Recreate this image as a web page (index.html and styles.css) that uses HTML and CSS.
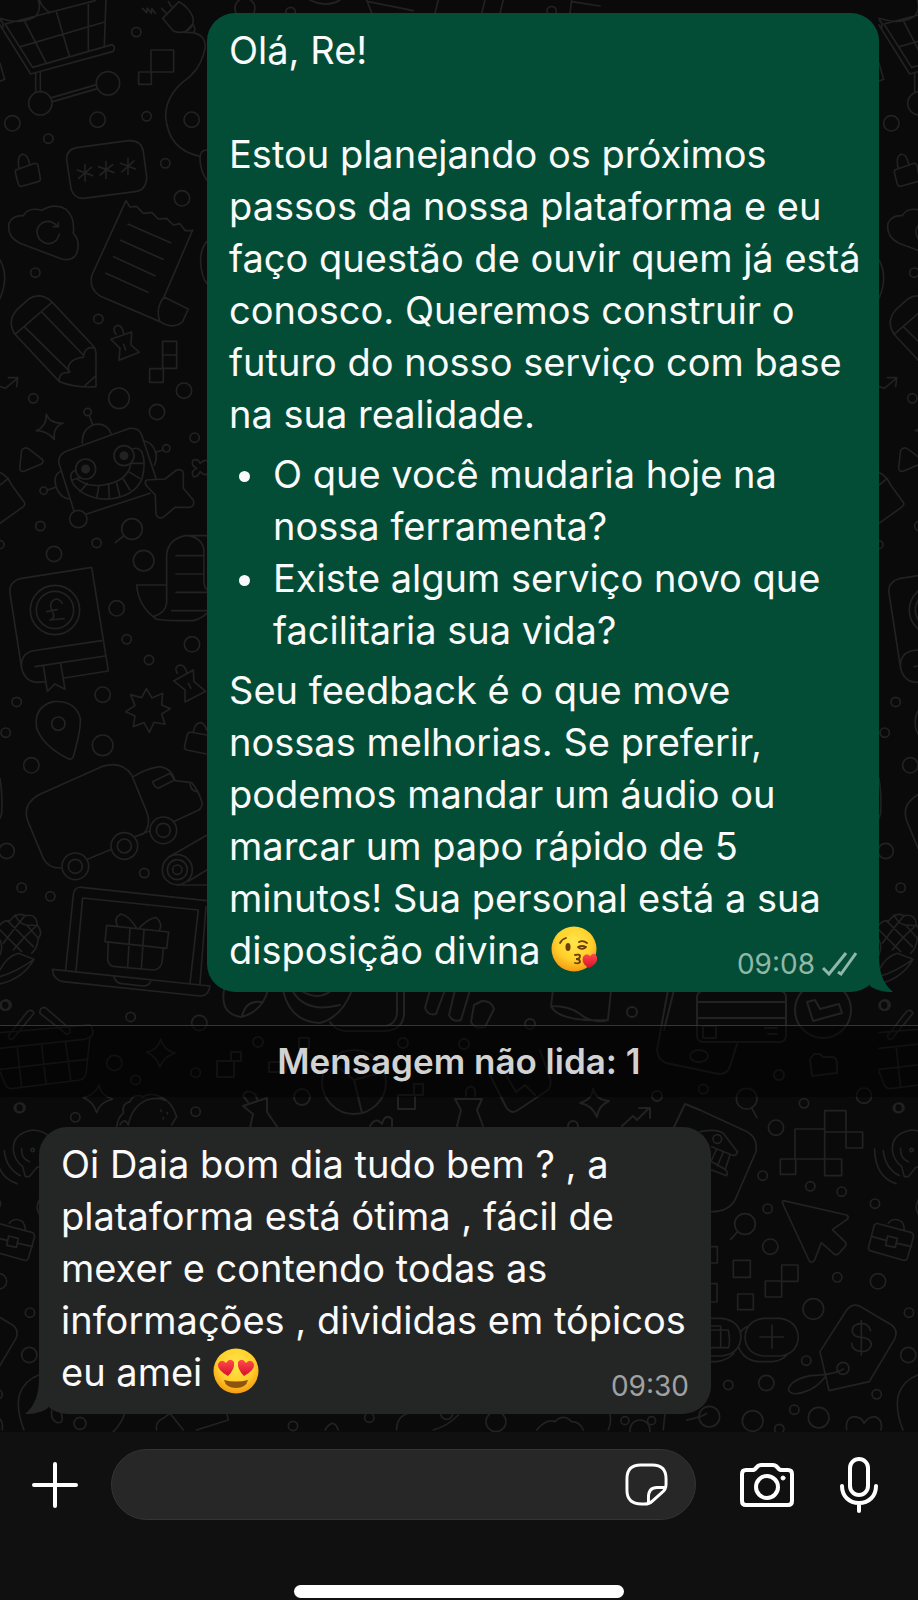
FILE: index.html
```html
<!DOCTYPE html>
<html lang="pt-BR">
<head>
    <meta charset="UTF-8">
    <meta name="viewport" content="width=device-width, initial-scale=1.0">
    <title>Conversa</title>
    <link rel="stylesheet" href="styles.css">
</head>
<body>

    <main class="chat">
        <!-- doodle wallpaper, repeats every 879px -->
        <svg class="wallpaper" aria-hidden="true">
            <g id="doodles">
                <g transform="scale(.3333)">
                    <path d="M0 55Q60 75 105 50Q125 30 115 0M0 75L92 222L340 154Q348 138 336 134L98 202L15 72L285 2M75 66L138 188M170 38L208 168M265 6V150M318 0L313 136M62 140L314 66M0 60Q12 66 8 84M118 0Q128 25 150 38"/>
                    <path d="M107 220V275M121 217V275M155 293L290 254M158 305L292 266M0 190L14 238L0 244"/>
                    <circle cx="121" cy="310" r="35"/><circle cx="324" cy="250" r="35"/>
                    <path d="M505 5L515 20M485 25L497 38M537 5L488 55L520 93Q545 103 565 90Q585 75 578 50Q565 20 537 5M555 97L578 72Q590 88 580 98ZM580 98Q630 110 610 165Q595 215 550 245Q497 290 497 350Q505 450 600 469M428 25L440 38L442 24L454 40L456 26L466 40"/>
                    <path d="M453 150H521V216H453ZM416 216H454V253H416Z"/>
                    <path d="M200 480Q198 450 230 443L385 422Q425 420 430 455L440 530Q440 570 405 575L250 595Q220 595 213 565Z"/>
                    <path d="M255 493V543M232 510L278 527M236 535L274 502M318 485V535M296 500L342 518M300 525L338 494M384 475V523M362 490L406 507M366 516L402 483"/>
                    <path d="M47 510L105 490Q112 490 114 496L121 535Q122 542 115 545L65 559Q57 560 55 553L46 518ZM57 503Q50 470 66 463Q82 460 89 492"/>
                    <path d="M70 647Q85 620 125 631Q165 608 198 628Q225 650 220 700Q243 725 230 760Q218 785 185 777L60 730Q20 710 27 670Q38 645 70 647M173 680Q150 655 125 670Q100 690 119 718Q145 742 168 722Q177 710 178 702M160 680H175V667"/>
                    <path d="M378 602L276 825Q265 865 300 888L480 965Q520 990 548 965L565 927L492 891M578 690L492 891Q465 925 480 965M378 602L390 621L410 619L430 640L455 637L475 657L500 655L520 675L540 671L556 692H578M385 673L512 728M362 721L489 778M341 770L465 827M318 820L444 877"/>
                    <path d="M50 930L85 898Q120 875 155 905L280 1038Q288 1048 288 1060V1160Q230 1165 178 1145L45 1003Q20 965 50 930M45 1003L155 908M75 982L210 1115M127 938L250 1065M178 1145Q175 1115 207 1118Q195 1080 250 1072Q255 1035 285 1045M255 1157L288 1127"/>
                    <path d="M348 1003Q335 985 350 977Q365 973 371 1000M333 1018L395 996L393 1035L418 1057L357 1081L360 1045ZM371 1033L377 1050"/>
                    <path d="M488 1024H530V1105H488ZM488 1065H530M449 1106H490V1147H449Z"/>
                    <path d="M0 780Q28 830 0 895M0 1160L16 1165L52 1135M25 1133L53 1133L50 1160M620 450Q600 450 600 475Q600 510 620 540M620 725Q600 750 602 790Q605 830 620 850"/>
                    <circle cx="409" cy="96" r="14"/><circle cx="37" cy="370" r="23"/><circle cx="293" cy="359" r="23"/><circle cx="145" cy="416" r="14"/><circle cx="440" cy="349" r="14"/><circle cx="575" cy="359" r="23"/><circle cx="496" cy="490" r="14"/><circle cx="546" cy="595" r="23"/><circle cx="106" cy="818" r="14"/><circle cx="295" cy="957" r="14"/><circle cx="552" cy="1172" r="23"/><circle cx="357" cy="1195" r="31"/><circle cx="100" cy="1195" r="14"/>
                    <circle cx="735" cy="25" r="30"/><circle cx="872" cy="36" r="14"/><circle cx="1655" cy="33" r="14"/>
                    <path d="M930 0Q980 25 1020 0M1100 0L1115 38M1105 5L1240 32M1315 0L1305 40M1455 0L1445 40M1510 0L1500 40M1715 0L1710 40M1715 5L1800 18"/>
                </g>
                <g transform="translate(0 400) scale(.3333)">
                    <path d="M139 42Q148 70 189 70Q158 80 163 118Q140 92 109 92Q140 80 139 42M65 150Q75 138 88 148L127 178Q132 187 124 192L72 214Q60 216 59 204ZM0 218Q20 225 35 255L74 308Q76 315 70 320L0 370M0 255L25 235"/>
                    <path d="M180 200Q168 170 195 155L385 86Q415 80 425 105L468 235M180 200L222 333M260 342L450 280M247 130Q245 85 285 73Q320 68 333 100M268 46L277 72M180 215Q155 230 172 270Q185 295 208 297M143 270L167 262M435 123Q460 130 468 160Q470 185 463 195M470 156L488 150"/>
                    <circle cx="263" cy="36" r="11"/><circle cx="131" cy="272" r="11"/><circle cx="499" cy="145" r="11"/><circle cx="235" cy="357" r="26"/><circle cx="257" cy="207" r="30"/><circle cx="257" cy="207" r="11" class="solid"/><circle cx="372" cy="167" r="30"/><circle cx="372" cy="167" r="11" class="solid"/>
                    <path d="M228 210Q200 220 222 255Q260 300 330 297Q400 290 425 240Q440 190 425 155Q415 140 397 147M232 237Q260 262 310 255Q380 245 392 195M218 240L240 232M240 275L262 250M290 295L297 256M328 297L326 255M360 290L350 250M390 270L370 237M420 236L386 215M430 190H395"/>
                    <path d="M440 240L495 237L530 210Q548 205 550 220V265L580 300Q585 320 568 322H525L490 352Q470 358 468 340L466 285L440 258Q432 245 440 240Z"/>
                    <path d="M580 180Q595 175 600 190Q615 175 625 185M580 180Q570 195 590 205Q570 215 580 230Q595 230 600 215Q615 230 625 220"/>
                    <circle cx="396" cy="387" r="31"/><path d="M371 408L346 428"/>
                    <path d="M410 555H500M410 555Q415 620 470 658Q490 663 580 662Q605 655 620 640M500 555V470Q500 420 555 407H620M500 555V610Q495 640 460 650M565 407Q610 415 612 455V550Q615 565 622 570M528 467H610M528 522H610M528 577H620M515 632H620"/>
                    <path d="M275 502L65 535Q25 545 30 580L65 805Q75 845 110 847L135 845M275 502L325 813L192 834M65 805Q60 765 95 753L305 722M105 800L315 768M130 797L142 874L165 852L195 868L182 790"/>
                    <circle cx="165" cy="630" r="74"/><circle cx="165" cy="630" r="56"/><path d="M187 610Q175 590 158 602Q145 615 160 640Q165 655 150 660L192 656M140 635L172 629"/>
                    <path d="M208 1078Q130 1040 110 985Q100 920 160 905Q225 900 241 955Q243 990 220 1070Q215 1080 208 1078Z"/><circle cx="175" cy="971" r="20"/>
                    <path d="M439 866L456 894L488 880L485 915L511 926L485 942L495 973L462 967L448 997L432 968L400 980L405 948L377 935L405 917L392 884L425 893Z"/>
                    <path d="M532 820Q520 800 540 795Q555 795 560 817M521 843L580 810L582 845L617 874L555 906V870ZM565 850L573 865M620 1062L560 1050Q552 1048 554 1038L562 1003Q566 995 575 997L620 1005M580 995Q585 968 603 968Q615 972 620 990"/>
                    <circle cx="471" cy="36" r="23"/><circle cx="584" cy="113" r="14"/><circle cx="121" cy="378" r="14"/><circle cx="0" cy="434" r="12"/><circle cx="290" cy="429" r="14"/><circle cx="162" cy="462" r="23"/><circle cx="431" cy="482" r="31"/><circle cx="350" cy="625" r="23"/><circle cx="380" cy="718" r="14"/><circle cx="576" cy="733" r="23"/><circle cx="447" cy="780" r="14"/><circle cx="308" cy="884" r="23"/><circle cx="50" cy="906" r="14"/><circle cx="17" cy="998" r="14"/><circle cx="308" cy="1036" r="31"/><circle cx="94" cy="1096" r="23"/>
                </g>
                <g transform="translate(0 740) scale(.3333)">
                    <path d="M182 384Q145 385 130 355L84 245Q65 195 115 165L305 80Q365 60 395 105L440 215Q455 255 430 282L405 290M262 358L335 328M405 290L450 272M400 110Q440 85 480 80Q515 85 525 120M458 125L510 100L523 120L475 145Q462 140 458 125ZM525 122L575 128Q595 150 607 190Q605 208 590 213L520 245M570 130Q572 152 590 155"/>
                    <circle cx="226" cy="379" r="40"/><circle cx="226" cy="379" r="21"/><circle cx="373" cy="318" r="40"/><circle cx="373" cy="318" r="21"/><circle cx="490" cy="271" r="40"/><circle cx="490" cy="271" r="21"/>
                    <circle cx="532" cy="389" r="45"/><circle cx="532" cy="389" r="30"/><circle cx="532" cy="389" r="14"/><path d="M508 350L620 286M565 424L620 390M532 435H620"/>
                    <path d="M197 690L220 465Q222 440 245 442L620 482M228 692L248 474L595 510L570 730M600 732L618 500M157 688L630 738Q625 770 600 768L190 725Q160 720 157 688ZM342 712Q350 730 365 731L430 738Q447 738 452 724"/>
                    <path d="M320 556L506 576L500 625L315 605ZM325 607L323 660Q328 680 345 680L460 690Q485 688 487 660L490 624M390 565L383 682M432 570L424 685M410 565Q385 525 362 522Q340 535 352 558M415 567Q445 535 468 532Q490 550 478 572"/>
                    <path d="M0 555Q10 540 30 542Q50 515 75 527Q110 520 112 555Q130 580 115 595Q112 625 95 640M0 570L65 635M25 545L100 620M75 527L40 570L10 610M112 555L75 590L40 630M80 555L115 595M0 600Q10 620 0 645M0 690Q20 650 55 640L102 658Q70 715 0 732M0 710Q50 695 102 658M45 525Q60 555 80 555L112 557"/>
                    <path d="M25 888L82 815Q95 805 102 820L40 895Q30 905 25 888ZM120 820Q118 802 135 802L208 865Q215 880 200 883ZM0 878L270 855Q285 870 275 888Q270 895 250 898L0 925M270 890L258 1000Q255 1015 240 1020L35 1046Q20 1046 15 1032L0 995M0 988L260 958M52 925L65 1042M125 915L138 1030M197 907L212 1020"/>
                    <path d="M482 897Q490 930 525 940Q490 950 480 982Q470 950 440 936Q475 930 482 897M297 1035Q300 1065 338 1078Q300 1085 290 1118Q280 1085 250 1073Q285 1065 297 1035"/>
                    <path d="M350 1160Q355 1130 370 1120Q365 1090 390 1085Q400 1060 430 1070Q455 1055 485 1072Q515 1085 530 1130L515 1155M360 1155Q375 1130 385 1155Q395 1100 440 1080Q480 1070 495 1082M483 1110V1114M502 1118V1122M490 1133V1137"/>
                    <path d="M0 115Q8 160 5 220L0 235"/>
                    <circle cx="20" cy="333" r="23"/><circle cx="433" cy="399" r="14"/><circle cx="65" cy="443" r="14"/><circle cx="151" cy="469" r="14"/><circle cx="14" cy="796" r="14"/><circle cx="392" cy="831" r="14"/><circle cx="598" cy="849" r="23"/><circle cx="343" cy="969" r="23"/><circle cx="407" cy="1020" r="14"/><circle cx="587" cy="998" r="14"/><circle cx="57" cy="1104" r="14"/><circle cx="226" cy="1132" r="14"/><circle cx="587" cy="1115" r="14"/>
                </g>
                <!-- strip around the unread divider -->
                <g class="fine">
                    <path d="M224 990Q220 1014 241 1017Q262 1012 268 990M242 1016Q246 1000 261 1002M283 990Q290 1022 320 1023Q342 1017 352 990M292 990Q305 1014 340 1005M300 990Q318 1002 332 990M404 990V1015Q402 1030 386 1031H345Q335 1030 330 1022M397 990V1013Q396 1024 386 1026H340"/>
                    <path d="M430 990L425 1008Q428 1016 436 1014L445 990M455 990L449 1015Q453 1023 461 1020L470 990M474 1005L471 1022Q475 1030 485 1027L494 1009Q492 1001 482 1001ZM553 990L551 1006Q570 1006 580 1014Q592 1024 608 1020L611 990M551 1006Q558 1022 608 1020"/>
                    <path d="M668 990L657 1050Q658 1060 666 1063L719 1074Q728 1074 730 1066L737 1044M674 990L664 1030"/>
                    <rect x="697" y="991" width="89" height="51" rx="6"/><path d="M697 1002H786M697 1018H786M703 1026H716V1038H703ZM765 1028H777M768 1034H777"/><ellipse cx="699" cy="1056" rx="9" ry="6"/>
                    <circle cx="823" cy="1010" r="28"/><path d="M807 1002L813 1021L842 1013L839 1004L820 1009L815 1000Z"/>
                    <path d="M810 1059L814 1054H820L823 1057H833Q837 1058 837 1064V1073L812 1076ZM217 1061H234V1077H217ZM231 1052H241V1061H231ZM269 1062H286V1072H269ZM299 1038H309V1048H299Z"/>
                    <circle cx="354" cy="1082" r="32"/><path d="M354 1080L330 1060M354 1080L383 1072M354 1080L362 1113M398 1095H415V1109H398ZM414 1084H423V1095H414Z"/>
                    <path d="M248 1102L243 1096Q246 1088 255 1094L258 1101M243 1106L267 1098V1112L278 1128M243 1106L253 1114L250 1128M466 1096V1090Q471 1083 475 1090V1096M455 1099H482L477 1110L483 1126M455 1099L461 1110L457 1126M490 1075L506 1107Q511 1115 518 1110L548 1090Q553 1083 549 1076L540 1050M506 1075L516 1092L525 1085L535 1095"/>
                    <path d="M593 1089Q596 1100 609 1101Q598 1106 597 1117Q592 1105 580 1103Q592 1100 593 1089M622 1126L633 1116L637 1120L649 1108M639 1108H650V1118M674 1127L685 1104L700 1110M370 1126Q376 1116 382 1124Q385 1113 392 1119V1126"/>
                    <circle cx="302" cy="1097" r="8"/><circle cx="258" cy="1042" r="5"/><circle cx="403" cy="1043" r="5"/><circle cx="464" cy="1044" r="5"/><circle cx="530" cy="1024" r="5"/><circle cx="632" cy="1012" r="5"/><circle cx="779" cy="1075" r="5"/><circle cx="657" cy="1096" r="5"/><circle cx="885" cy="1005" r="5"/><circle cx="573" cy="1126" r="5"/>
                </g>
                <g transform="translate(700 1080) scale(.3333)">
                    <circle cx="140" cy="56" r="31"/><path d="M155 84L171 113M0 90L135 152Q175 170 168 215L105 360Q85 395 35 395M0 155Q50 145 70 160L112 215Q110 230 95 225L35 200M50 207L35 240M70 216L52 258M90 225L75 270M35 245L75 268Q85 275 80 287L35 270"/><circle cx="52" cy="177" r="13"/>
                    <path d="M285 147H374V237H285ZM374 92H438V156H374ZM438 156H488V204H438V156M241 237H287V283H241ZM374 237H425V287H374Z"/>
                    <path d="M250 362L440 405Q447 410 443 417L397 449L437 487Q440 495 435 500L415 522Q407 527 400 520L364 488L344 540Q335 552 328 543L250 375Q245 365 250 362Z"/>
                    <circle cx="135" cy="432" r="31"/><path d="M113 455L92 478M35 500H52V549H35M100 541H151V592H100ZM35 611H51V666H35M113 642H160V689H113ZM245 555H294V604H245ZM196 603H245V651H196Z"/>
                    <path d="M530 430L635 458Q643 465 640 473L622 535Q618 543 610 541L510 512Q504 508 506 500L523 435ZM517 470L560 482M592 490L635 500M563 468L592 475L586 502L557 496ZM565 430Q580 410 605 425Q615 440 612 452"/>
                    <path d="M625 290L648 262Q690 255 700 205Q690 152 635 150Q575 160 577 210Q580 240 605 260L613 290ZM524 207Q525 290 588 311M550 212Q555 265 598 287M602 205Q600 235 625 245"/><circle cx="635" cy="210" r="5"/>
                    <path d="M35 715H65Q120 722 123 770Q120 822 65 828H35M35 845H50Q85 840 102 820M35 738H62V803M35 750H85Q92 790 85 803H35M190 715H240Q292 722 295 772Q292 822 240 828H190Q138 822 135 772Q138 722 190 715M123 755Q135 740 145 740M115 800Q130 840 175 845H215Q245 845 265 820M216 735V805M180 771H250"/>
                    <path d="M360 815L440 690Q460 665 485 682L575 735Q595 750 585 775L508 905L387 932ZM512 752Q505 730 485 730Q455 732 457 755Q462 772 485 772Q515 775 514 795Q508 815 485 815Q455 812 455 790M484 722V825M430 867Q400 885 330 887Q270 900 265 930Q275 950 315 935Q350 925 378 888"/><circle cx="429" cy="865" r="18"/>
                    <path d="M440 1050Q435 1015 460 1010Q485 1010 492 1030Q505 1010 525 1010Q550 1020 543 1050M609 1050Q585 990 595 945Q610 900 654 885Q710 870 780 900M660 410Q640 385 655 360"/>
                    <circle cx="10" cy="27" r="14"/><circle cx="312" cy="70" r="14"/><circle cx="492" cy="47" r="23"/><circle cx="598" cy="83" r="14"/><circle cx="228" cy="143" r="23"/><circle cx="188" cy="287" r="14"/><circle cx="331" cy="319" r="14"/><circle cx="425" cy="335" r="14"/><circle cx="203" cy="386" r="14"/><circle cx="525" cy="371" r="14"/><circle cx="211" cy="500" r="23"/><circle cx="412" cy="592" r="14"/><circle cx="534" cy="604" r="23"/><circle cx="340" cy="687" r="31"/><circle cx="627" cy="698" r="14"/><circle cx="319" cy="842" r="14"/><circle cx="625" cy="825" r="23"/><circle cx="85" cy="915" r="14"/><circle cx="199" cy="909" r="23"/><circle cx="530" cy="943" r="14"/><circle cx="283" cy="989" r="14"/><circle cx="356" cy="1013" r="31"/><circle cx="158" cy="1023" r="31"/><circle cx="28" cy="1010" r="31"/><circle cx="238" cy="1047" r="14"/>
                </g>
                <!-- strip above the compose bar -->
                <g transform="translate(0 1120) scale(.3333)">
                    <path d="M155 870V890Q165 915 185 905Q190 890 180 870M375 878Q365 910 340 935M470 930Q465 905 490 895L510 880L550 930M590 930L685 900L680 878M975 930Q1000 890 1015 930M1190 930Q1190 890 1225 880M1300 930Q1340 920 1375 885M1610 930Q1640 895 1665 905Q1690 880 1715 905Q1740 905 1750 930M1825 930Q1835 910 1830 880M1990 930L1995 880M2060 900Q2110 890 2120 880"/>
                    <circle cx="240" cy="910" r="18"/><circle cx="879" cy="918" r="14"/><circle cx="1108" cy="893" r="14"/><circle cx="1340" cy="880" r="18"/><circle cx="1488" cy="905" r="30"/><circle cx="1920" cy="930" r="30"/><circle cx="1875" cy="902" r="12"/><circle cx="1955" cy="902" r="12"/>
                </g>
            </g>
            <use href="#doodles" x="879"/>
            <use href="#doodles" x="-879"/>
        </svg>

        <article class="bubble sent">
            <p>Olá, Re!<br><br>Estou planejando os próximos<br>passos da nossa plataforma e eu<br>faço questão de ouvir quem já está<br>conosco. Queremos construir o<br>futuro do nosso serviço com base<br>na sua realidade.</p>
            <ul>
                <li>O que você mudaria hoje na<br>nossa ferramenta?</li>
                <li>Existe algum serviço novo que<br>facilitaria sua vida?</li>
            </ul>
            <p>Seu feedback é o que move<br>nossas melhorias. Se preferir,<br>podemos mandar um áudio ou<br>marcar um papo rápido de 5<br>minutos! Sua personal está a sua<br>disposição divina
                <svg class="emoji" viewBox="0 0 46 46" role="img" aria-label="😘">
                    <defs>
                        <radialGradient id="face" cx=".5" cy=".35" r=".65">
                            <stop offset="0" stop-color="#ffe74a"/>
                            <stop offset=".6" stop-color="#ffd02c"/>
                            <stop offset="1" stop-color="#f59a12"/>
                        </radialGradient>
                        <linearGradient id="heart" x1="0" y1="0" x2="0" y2="1">
                            <stop offset="0" stop-color="#ff4b4b"/>
                            <stop offset="1" stop-color="#d80f2c"/>
                        </linearGradient>
                    </defs>
                    <circle cx="23" cy="23" r="22.5" fill="url(#face)"/>
                    <g fill="none" stroke="#6b3d08" stroke-width="1.8" stroke-linecap="round">
                        <path d="M9 17Q11 13 15 12M28 16Q32 14 36 17M28 22Q32 24 35 21M27 21Q31 19 35 21"/>
                        <path d="M24 29Q29 28 29 30Q29 33 25 33Q29 33 29 36Q28 38 24 37"/>
                    </g>
                    <ellipse cx="17" cy="21" rx="2.5" ry="4" fill="#6b3d08"/>
                    <path d="M38 42Q30 38 32 31Q35 26 39 30Q44 25 46 31Q47 38 38 42Z" fill="url(#heart)"/>
                </svg></p>
            <div class="meta">
                <time>09:08</time>
                <svg class="ticks" viewBox="0 0 38 26" aria-hidden="true">
                    <path d="M4 17L10 23L27 2M19 21L22 23L37 2"/>
                </svg>
            </div>
            <svg class="tail" viewBox="0 0 30 36" aria-hidden="true"><path d="M0 10L16 0C16 16 20 28 30 36C20 36 13 34 7 30Z"/></svg>
        </article>

        <div class="unread">Mensagem não lida: 1</div>

        <article class="bubble received">
            <p>Oi Daia bom dia tudo bem ? , a<br>plataforma está ótima , fácil de<br>mexer e contendo todas as<br>informações , divididas em tópicos<br>eu amei
                <svg class="emoji" viewBox="0 0 46 46" role="img" aria-label="😍">
                    <circle cx="23" cy="23" r="22.5" fill="url(#face)"/>
                    <path d="M15 28Q4 22 5 16Q8 10 13 15Q17 9 21 14Q22 21 15 28ZM31 28Q24 21 25 14Q29 9 33 15Q38 10 41 16Q42 22 31 28Z" fill="url(#heart)"/>
                    <path d="M11 32Q23 35 35 32Q33 40 23 40Q13 40 11 32Z" fill="#8f5310"/>
                </svg></p>
            <div class="meta"><time>09:30</time></div>
            <svg class="tail" viewBox="0 0 30 36" aria-hidden="true"><path d="M0 10L16 0C16 16 20 28 30 36C20 36 13 34 7 30Z"/></svg>
        </article>
    </main>

    <footer class="compose">
        <form class="compose-row">
            <button type="button" class="icon-btn plus" aria-label="Anexar">
                <svg viewBox="0 0 48 48"><path d="M24 3V45M3 24H45"/></svg>
            </button>
            <div class="field">
                <input type="text" aria-label="Mensagem">
                <button type="button" class="icon-btn sticker" aria-label="Figurinhas">
                    <svg viewBox="0 0 44 44"><path d="M42 22V16Q42 2 28 2H16Q2 2 2 16V28Q2 42 17 42H20Q25 42 28 39L38 30Q42 27 42 22M24 41V35Q24 25 33 25H41"/></svg>
                </button>
            </div>
            <button type="button" class="icon-btn camera" aria-label="Câmera">
                <svg viewBox="0 0 54 44"><path d="M6 7H12Q15 7 16 5L18 3Q19 2 21 2H33Q35 2 36 3L38 5Q39 7 42 7H48Q52 7 52 11V38Q52 42 48 42H6Q2 42 2 38V11Q2 7 6 7Z"/><circle cx="27" cy="24" r="11"/><circle cx="43" cy="15" r="2" class="dot"/></svg>
            </button>
            <button type="button" class="icon-btn mic" aria-label="Gravar áudio">
                <svg viewBox="0 0 38 56"><rect x="10" y="2" width="18" height="36" rx="9"/><path d="M2 29C2 39 9 46 19 46S36 39 36 29M19 46V54"/></svg>
            </button>
        </form>
        <div class="home-bar"></div>
    </footer>

</body>
</html>
```
FILE: styles.css
```css
* {
    box-sizing: border-box;
}

body {
    margin: 0;
    min-height: 100vh;
    display: flex;
    flex-direction: column;
    background: #101010;
    color: #fafafa;
    font-family: Inter, "Liberation Sans", sans-serif;
    font-size: 38px;
    line-height: 52px;
}

.chat {
    position: relative;
    z-index: 0;
    flex: 1;
    display: flex;
    flex-direction: column;
    padding: 13px 39px 18px;
    background: #0a0a0a;
    overflow: hidden;
}

.wallpaper {
    position: absolute;
    top: 0;
    left: 0;
    width: 100%;
    height: 100%;
    z-index: -1;
    fill: none;
    stroke: #222222;
    stroke-width: 5px;
    stroke-linecap: round;
    stroke-linejoin: round;
}

.wallpaper .fine {
    stroke-width: 2px;
}

.wallpaper .solid {
    fill: #222222;
}

/* messages */
.bubble {
    position: relative;
    width: 80%;
    display: flex;
    flex-direction: column;
    padding: 11px 22px 12px;
    border-radius: 28px;
    white-space: nowrap;
}

.bubble p {
    margin: 0;
}

.bubble ul {
    list-style: none;
    margin: 8px 0;
    padding-left: 44px;
}

.bubble li {
    position: relative;
}

.bubble li::before {
    content: "";
    position: absolute;
    left: -34px;
    top: 23px;
    width: 11px;
    height: 11px;
    border-radius: 50%;
    background: #fafafa;
}

.sent {
    align-self: flex-end;
    background: #034d36;
}

.received {
    background: #242626;
}

.tail {
    position: absolute;
    right: -14px;
    bottom: 0;
    width: 30px;
    height: 36px;
    fill: #034d36;
}

.received .tail {
    right: auto;
    left: -14px;
    fill: #242626;
    transform: scaleX(-1);
}

.emoji {
    width: 46px;
    height: 46px;
    vertical-align: -8px;
}

.meta {
    align-self: flex-end;
    display: flex;
    align-items: center;
    gap: 4px;
    margin-top: -28px;
    color: #a1a1a1;
    font-size: 28px;
    line-height: 32px;
}

.sent .meta {
    color: #8fb8a8;
}

.ticks {
    width: 38px;
    height: 26px;
    fill: none;
    stroke: #8fb8a8;
    stroke-width: 3px;
}

.unread {
    margin: 33px -39px 30px;
    height: 72px;
    border-top: 1px solid #363636;
    background: rgba(0, 0, 0, 0.5);
    color: #d2d2d2;
    font-size: 35px;
    font-weight: 600;
    line-height: 70px;
    text-align: center;
}

/* bottom bar */
.compose {
    padding: 17px 0 3px;
    background: #101010;
}

.compose-row {
    display: flex;
    align-items: center;
    padding: 0 40px 0 31px;
}

.icon-btn {
    display: flex;
    flex: none;
    padding: 0;
    border: none;
    background: none;
    cursor: pointer;
}

.icon-btn svg {
    width: 100%;
    fill: none;
    stroke: white;
    stroke-width: 4px;
    stroke-linecap: round;
    stroke-linejoin: round;
}

.icon-btn .dot {
    fill: white;
    stroke-width: 1px;
}

.plus {
    width: 48px;
}

.field {
    flex: 1;
    min-width: 0;
    display: flex;
    align-items: center;
    height: 71px;
    margin: 0 44px 0 32px;
    padding: 0 27px 0 30px;
    border: 1px solid #343434;
    border-radius: 36px;
    background: #272727;
}

.field input {
    flex: 1;
    min-width: 0;
    border: none;
    outline: none;
    background: none;
    color: white;
    font: inherit;
}

.sticker {
    width: 43px;
}

.icon-btn.sticker svg {
    stroke-width: 3px;
}

.camera {
    width: 54px;
    margin-right: 46px;
}

.mic {
    width: 38px;
}

.home-bar {
    width: 36%;
    height: 13px;
    margin: 65px auto 0;
    border-radius: 7px;
    background: white;
}
```
